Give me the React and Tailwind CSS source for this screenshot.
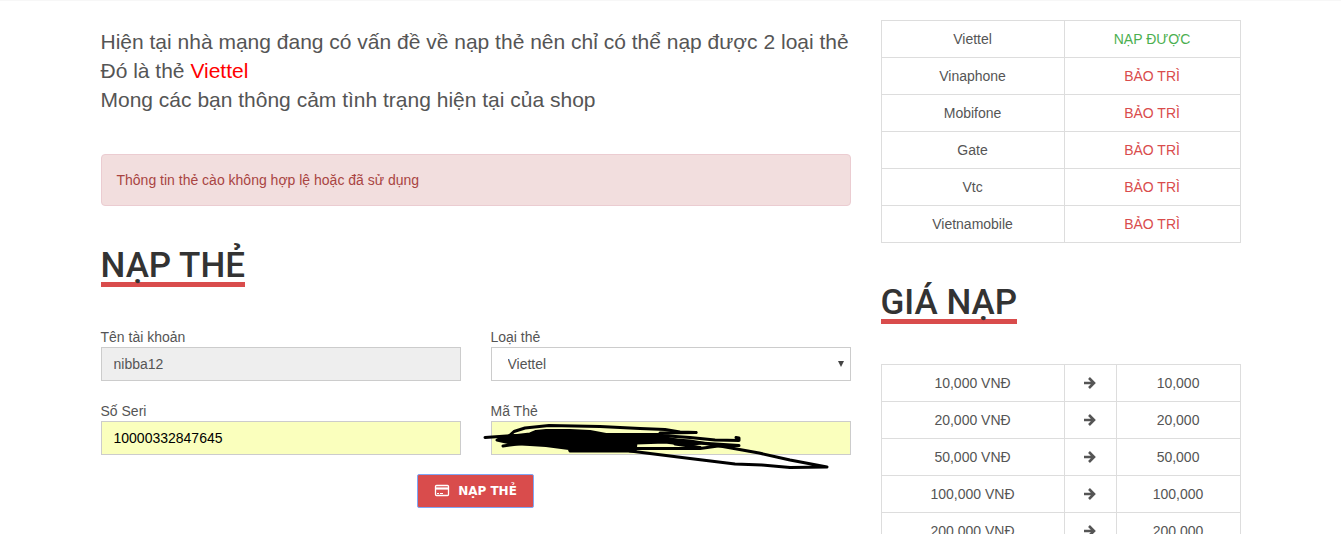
const cardStatus = [
  { name: "Viettel", active: true },
  { name: "Vinaphone", active: false },
  { name: "Mobifone", active: false },
  { name: "Gate", active: false },
  { name: "Vtc", active: false },
  { name: "Vietnamobile", active: false },
];

const prices = ["10,000", "20,000", "50,000", "100,000", "200,000"];

function SectionTitle({ children }) {
  return (
    <h3 className="inline-block border-b-5 border-[#d94c4c] font-[Roboto,sans-serif] text-[35px] leading-8 font-medium text-[#333333]">
      {children}
    </h3>
  );
}

function Field({ id, label, children }) {
  return (
    <div className="relative w-1/2 px-[15px]">
      <label htmlFor={id} className="block">
        {label}
      </label>
      {children}
    </div>
  );
}

function Scribble() {
  return (
    <svg
      className="pointer-events-none absolute top-4 left-0"
      width="370"
      height="60"
      viewBox="476 417 370 60"
      fill="none"
      stroke="#000"
      strokeWidth="3"
      strokeLinecap="round"
      strokeLinejoin="round"
      aria-hidden="true"
    >
      <path
        fill="#000"
        d="M497 440L503 437L530 434L536 431.500L546 430.500L570 430.500L590 431.500L606 434.500L662 434.500L652 435L680 441L700 443L690 445L665 442L636 443L635 451L570 451L569 448.500L546 445.500L530 444.500L512 443.500Z"
      />
      <path d="M485 437.500L515 435.500M503 446L522 443.500" />
      <path d="M509 436L514 431.500L525 428L549 425.500L600 426.500L640 428.500L665 429.500L680 432L696 432.500" />
      <path d="M660 433L696 432.500M654 435L690 437.500L715 440L739 440.500L739 438L736 437.500" />
      <path d="M650 438L690 441L720 446L759 453L790 460L827 467L790 467.500L762 465L735 464L690 458.500L630 451" />
      <path d="M632 448.500L700 448.500L718 446L739 445.500L700 443L650 440M675 444L700 447.500" />
    </svg>
  );
}

function CardIcon() {
  return (
    <svg width="16" height="16" viewBox="0 0 16 16" fill="none" stroke="currentColor" aria-hidden="true">
      <rect x="1.500" y="2.500" width="13" height="10" rx="1" strokeWidth="1.300" />
      <path d="M1.500 5.500H14.500" strokeWidth="2.200" />
      <path d="M3 10.500H5M6 10.500H9" />
    </svg>
  );
}

function ArrowIcon() {
  return (
    <svg
      className="mx-auto"
      width="12"
      height="12"
      viewBox="0 0 12 12"
      fill="none"
      stroke="currentColor"
      strokeWidth="2.600"
      aria-hidden="true"
    >
      <path d="M0 6H10M5 1L10 6L5 11" />
    </svg>
  );
}

export default function App() {
  return (
    <div className="border-t border-[#f7f7f7] bg-white font-['Liberation_Sans',Arial,sans-serif] text-sm leading-5 text-[#555555]">
      <div className="mx-auto flex max-w-[1170px] pt-[19px]">
        <div className="w-2/3 px-[15px]">
          <p className="pt-[7px] text-[21px] leading-[29px]">
            Hiện tại nhà mạng đang có vấn đề về nạp thẻ nên chỉ có thể nạp được 2 loại thẻ
            <br />
            Đó là thẻ <span className="text-[#ff0000]">Viettel</span>
            <br />
            Mong các bạn thông cảm tình trạng hiện tại của shop
          </p>

          <div
            role="alert"
            className="mt-10 rounded border border-[#ebccd1] bg-[#f2dede] p-[15px] text-[#a94442]"
          >
            Thông tin thẻ cào không hợp lệ hoặc đã sử dụng
          </div>

          <div className="mt-11">
            <SectionTitle>NẠP THẺ</SectionTitle>
          </div>

          <form className="mt-10" onSubmit={(e) => e.preventDefault()}>
            <div className="-mx-[15px] flex flex-wrap gap-y-5">
              <Field id="account" label="Tên tài khoản">
                <input
                  id="account"
                  readOnly
                  defaultValue="nibba12"
                  className="h-[34px] w-full border border-[#cccccc] bg-[#eeeeee] px-3"
                />
              </Field>
              <Field id="card-type" label="Loại thẻ">
                <select
                  id="card-type"
                  className="h-[34px] w-full appearance-none border border-[#cccccc] bg-white px-4"
                >
                  <option>Viettel</option>
                </select>
                <svg
                  className="pointer-events-none absolute right-[22px] bottom-[14px]"
                  width="6"
                  height="6"
                  viewBox="0 0 6 6"
                  aria-hidden="true"
                >
                  <path d="M0 0H6L3 6Z" fill="#444444" />
                </svg>
              </Field>
              <Field id="serial" label="Số Seri">
                <input
                  id="serial"
                  defaultValue="10000332847645"
                  className="h-[34px] w-full border border-[#cccccc] bg-[#faffbd] px-3 text-black"
                />
              </Field>
              <Field id="card-code" label="Mã Thẻ">
                <input
                  id="card-code"
                  className="h-[34px] w-full border border-[#cccccc] bg-[#faffbd] px-3 text-black"
                />
                <Scribble />
              </Field>
            </div>

            <div className="mt-[19px] flex justify-center">
              <button
                type="submit"
                className="flex h-[34px] items-center gap-2 rounded-xs border border-[#7fa6f5] bg-[#d94c4c] px-4 font-['DejaVu_Sans',sans-serif] text-xs font-bold text-white"
              >
                <CardIcon />
                NẠP THẺ
              </button>
            </div>
          </form>
        </div>

        <div className="w-1/3 px-[15px]">
          <table className="w-full table-fixed border-collapse text-center">
            <colgroup>
              <col className="w-[51%]" />
              <col />
            </colgroup>
            <tbody>
              {cardStatus.map((card) => (
                <tr key={card.name}>
                  <td className="border border-[#dddddd] p-2">{card.name}</td>
                  <td
                    className={
                      card.active
                        ? "border border-[#dddddd] p-2 text-[#4caf50]"
                        : "border border-[#dddddd] p-2 text-[#d94c4c]"
                    }
                  >
                    {card.active ? "NẠP ĐƯỢC" : "BẢO TRÌ"}
                  </td>
                </tr>
              ))}
            </tbody>
          </table>

          <div className="mt-11">
            <SectionTitle>GIÁ NẠP</SectionTitle>
          </div>

          <table className="mt-10 w-full table-fixed border-collapse text-center">
            <colgroup>
              <col className="w-[51%]" />
              <col className="w-[52px]" />
              <col />
            </colgroup>
            <tbody>
              {prices.map((price) => (
                <tr key={price}>
                  <td className="border border-[#dddddd] p-2">{price} VNĐ</td>
                  <td className="border border-[#dddddd] p-2">
                    <ArrowIcon />
                  </td>
                  <td className="border border-[#dddddd] p-2">{price}</td>
                </tr>
              ))}
            </tbody>
          </table>
        </div>
      </div>
    </div>
  );
}
